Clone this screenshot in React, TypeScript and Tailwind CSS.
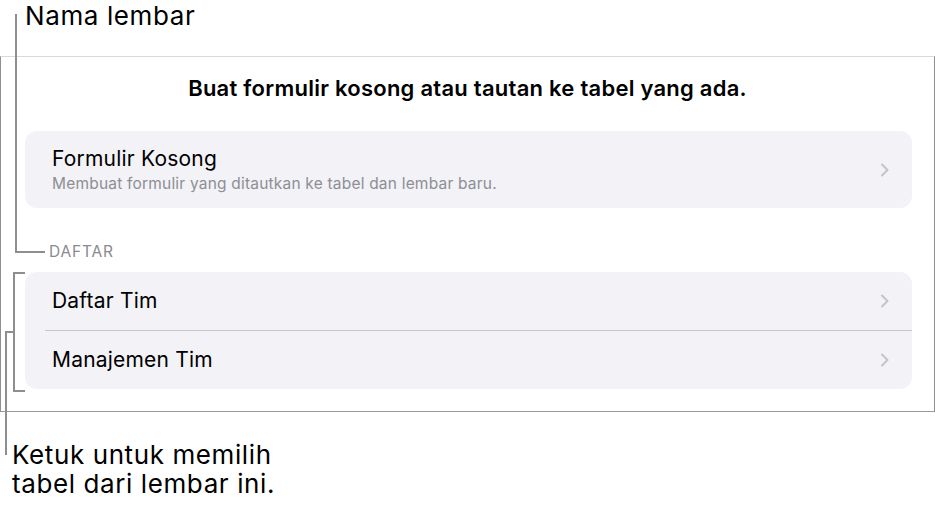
import React from "react";

function Chevron() {
  return (
    <svg width="10" height="14" viewBox="0 0 10 14" fill="none" className="shrink-0">
      <path d="M2 1.5 L7.5 7 L2 12.5" stroke="#c3c3c8" strokeWidth="2" strokeLinecap="round" strokeLinejoin="round" />
    </svg>
  );
}

export default function App() {
  return (
    <div
      className="relative w-[935px] h-[513px] bg-white overflow-hidden text-black"
      style={{ fontFamily: "Inter, 'Noto Sans', sans-serif" }}
    >
      {/* top label */}
      <div className="h-[56px] pl-[25px] pt-[1px] text-[26px] leading-[30px] tracking-[0.6px]">Nama lembar</div>

      {/* panel */}
      <div className="h-[356px] w-[935px] border-t border-t-[#d9d9d9] border-l border-l-[#8f8f8f] border-r border-r-[#8f8f8f] border-b border-b-[#9a9a9a] flex flex-col">
        <div className="pt-[18px] h-[74px] text-center text-[22px] leading-[27px] font-semibold tracking-[0.25px]">
          Buat formulir kosong atau tautan ke tabel yang ada.
        </div>
        <div className="ml-[24px] mr-[22px] h-[77px] rounded-[12px] bg-[#f2f2f7] flex items-center pl-[27px] pr-[22px]">
          <div className="flex-1">
            <div className="text-[21px] leading-[26px] tracking-[0.2px]">Formulir Kosong</div>
            <div className="mt-[2px] text-[15.5px] leading-[20px] text-[#8e8e93] tracking-[0.2px]">
              Membuat formulir yang ditautkan ke tabel dan lembar baru.
            </div>
          </div>
          <Chevron />
        </div>
        <div className="h-[64px] pl-[48px] pt-[34px] text-[15.5px] leading-[20px] text-[#8a8a8e] tracking-[0.8px]">DAFTAR</div>
        <div className="ml-[24px] mr-[22px] h-[117px] rounded-[12px] bg-[#f2f2f7] flex flex-col">
          <div className="h-[58px] flex items-center pl-[27px] pr-[22px]">
            <div className="flex-1 text-[21px] leading-[26px] tracking-[0.2px]">Daftar Tim</div>
            <Chevron />
          </div>
          <div className="ml-[20px] h-px bg-[#c8c8cc]" />
          <div className="h-[58px] flex items-center pl-[27px] pr-[22px]">
            <div className="flex-1 text-[21px] leading-[26px] tracking-[0.2px]">Manajemen Tim</div>
            <Chevron />
          </div>
        </div>
      </div>

      {/* bottom label */}
      <div className="pl-[12px] pt-[28px] text-[26px] leading-[29px] tracking-[0.6px]">
        Ketuk untuk memilih
        <br />
        tabel dari lembar ini.
      </div>

      {/* callout lines */}
      <div className="absolute left-[15px] top-[14px] w-[2px] h-[239px] bg-[#8e8e8e]" />
      <div className="absolute left-[15px] top-[251px] w-[30px] h-[2px] bg-[#8e8e8e]" />

      <div className="absolute left-[13px] top-[272px] w-[2px] h-[120px] bg-[#8e8e8e]" />
      <div className="absolute left-[13px] top-[272px] w-[12px] h-[2px] bg-[#8e8e8e]" />
      <div className="absolute left-[13px] top-[390px] w-[12px] h-[2px] bg-[#8e8e8e]" />

      <div className="absolute left-[5px] top-[331px] w-[10px] h-[2px] bg-[#8e8e8e]" />
      <div className="absolute left-[5px] top-[331px] w-[2px] h-[124px] bg-[#8e8e8e]" />
    </div>
  );
}
